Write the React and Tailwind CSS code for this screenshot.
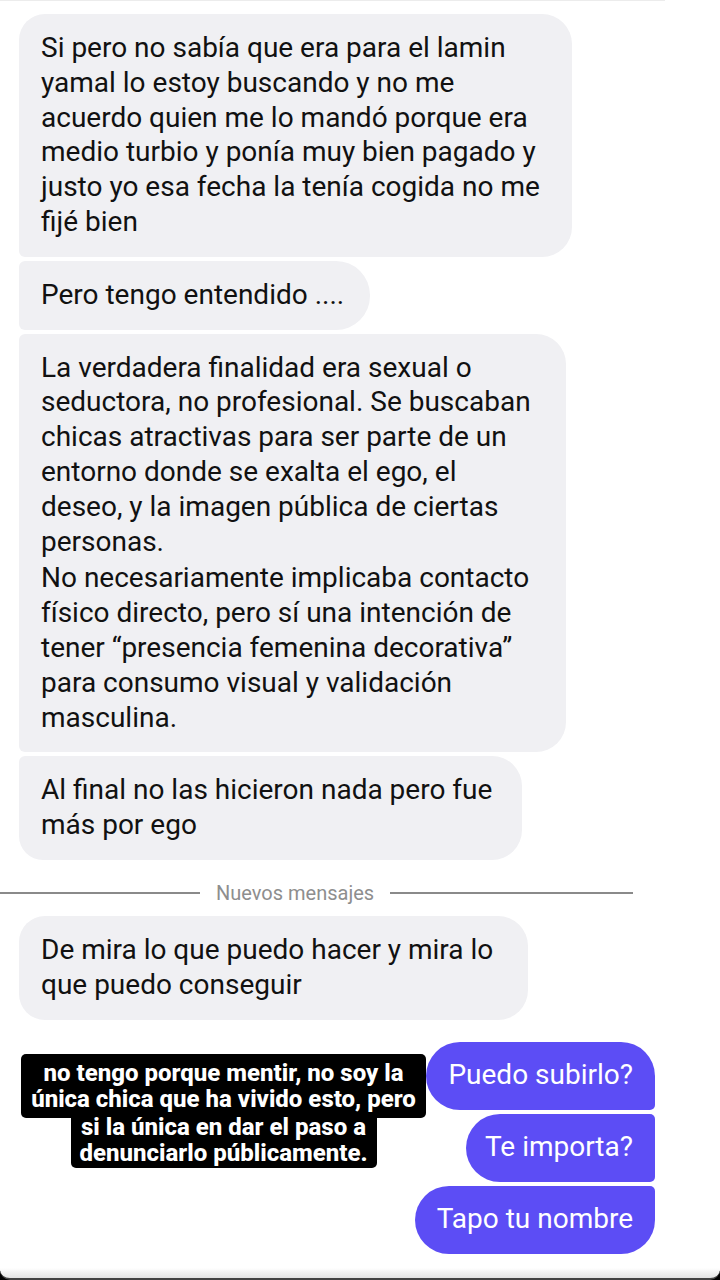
import React from "react";

const F = { fontFamily: "Roboto, 'Noto Sans', sans-serif" };

function Gray({ lines, w, cls, paras }) {
  return (
    <div
      className={`bg-[#f0f0f3] text-[#111111] text-[28px] leading-[34.8px] pl-[22px] py-[17px] ${cls}`}
      style={{ width: w }}
    >
      {lines.map((l, i) => (
        <div key={i} className={`whitespace-nowrap ${paras && paras.includes(i) ? "mt-[2px]" : ""}`}>
          {l}
        </div>
      ))}
    </div>
  );
}

function Purple({ text, w, cls }) {
  return (
    <div
      className={`bg-[#5c4df5] text-white text-[28px] leading-[34.8px] h-[68px] flex items-center justify-end pr-[22px] whitespace-nowrap ${cls}`}
      style={{ width: w }}
    >
      {text}
    </div>
  );
}

export default function App() {
  return (
    <div className="w-[720px] h-[1280px] bg-white overflow-hidden flex flex-col" style={F}>
      <div className="h-[1px] w-[665px] bg-[#ececec]" />
      <div className="flex flex-col gap-[4px] pl-[19px] mt-[13px]">
        <Gray
          w={553}
          cls="rounded-tl-[26px] rounded-r-[30px] rounded-bl-[6px]"
          lines={[
            "Si pero no sabía que era para el lamin",
            "yamal lo estoy buscando y no me",
            "acuerdo quien me lo mandó porque era",
            "medio turbio y ponía muy bien pagado y",
            "justo yo esa fecha la tenía cogida no me",
            "fijé bien",
          ]}
        />
        <Gray w={351} cls="rounded-l-[6px] rounded-r-[34px]" lines={["Pero tengo entendido ...."]} />
        <Gray
          w={547}
          cls="rounded-l-[6px] rounded-r-[30px]"
          paras={[6]}
          lines={[
            "La verdadera finalidad era sexual o",
            "seductora, no profesional. Se buscaban",
            "chicas atractivas para ser parte de un",
            "entorno donde se exalta el ego, el",
            "deseo, y la imagen pública de ciertas",
            "personas.",
            "No necesariamente implicaba contacto",
            "físico directo, pero sí una intención de",
            "tener “presencia femenina decorativa”",
            "para consumo visual y validación",
            "masculina.",
          ]}
        />
        <Gray
          w={503}
          cls="rounded-tl-[6px] rounded-bl-[24px] rounded-r-[30px]"
          lines={["Al final no las hicieron nada pero fue", "más por ego"]}
        />
      </div>

      <div className="flex items-center h-[24px] mt-[21px] mb-[11px]">
        <div className="w-[200px] h-[1.5px] bg-[#8a8a8a]" />
        <div className="px-[16px] text-[20px] text-[#8e8e8e] leading-none whitespace-nowrap">
          Nuevos mensajes
        </div>
        <div className="w-[243px] h-[1.5px] bg-[#8a8a8a]" />
      </div>

      <div className="pl-[19px]">
        <Gray
          w={509}
          cls="rounded-[26px] rounded-tr-[30px] rounded-br-[30px]"
          lines={["De mira lo que puedo hacer y mira lo", "que puedo conseguir"]}
        />
      </div>

      <div className="relative mt-[22px] flex flex-col items-end gap-[4px] pr-[65px]">
        <Purple w={229} text="Puedo subirlo?" cls="rounded-[34px] rounded-br-[5px]" />
        <Purple w={189} text="Te importa?" cls="rounded-l-[34px] rounded-r-[5px]" />
        <Purple w={240} text="Tapo tu nombre" cls="rounded-[34px] rounded-tr-[5px]" />

        <div className="absolute left-[21px] top-[12px] flex flex-col items-center text-white font-extrabold text-[24px] leading-[26px]">
          <div className="bg-black rounded-[5px] w-[405px] text-center py-[6px]">
            <div className="whitespace-nowrap">no tengo porque mentir, no soy la</div>
            <div className="whitespace-nowrap">única chica que ha vivido esto, pero</div>
          </div>
          <div className="bg-black rounded-b-[5px] w-[306px] text-center pb-[2px] -mt-[4px]">
            <div className="whitespace-nowrap">si la única en dar el paso a</div>
            <div className="whitespace-nowrap">denunciarlo públicamente.</div>
          </div>
        </div>
      </div>

      <div className="mt-auto bg-black">
        <div className="h-[12px] bg-gradient-to-b from-white to-[#e4e4e4] border-b-2 border-[#444444] rounded-b-[10px]" />
      </div>
    </div>
  );
}
